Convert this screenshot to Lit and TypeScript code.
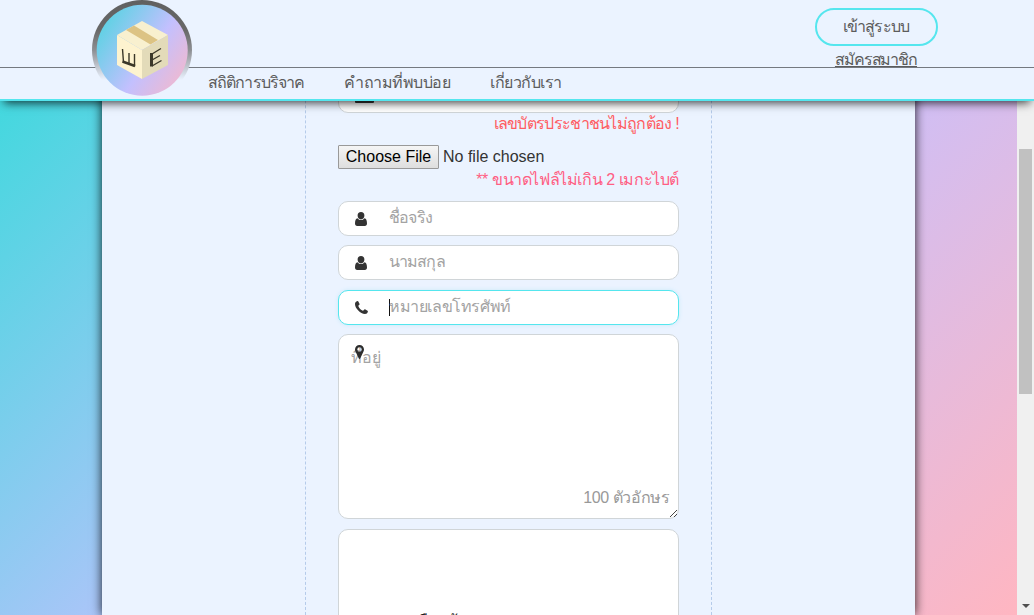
import { LitElement, html, css, svg } from "lit";
import { customElement, property } from "lit/decorators.js";
import { styleMap } from "lit/directives/style-map.js";

const icons: Record<string, unknown> = {
  user: svg`<svg viewBox="0 0 12 14" width="12" height="14"><path fill="#333" d="M6 0C8.200 0 9.400 1.400 9.400 3.600S8.200 7.500 6 7.500 2.600 5.800 2.600 3.600 3.800 0 6 0ZM2.500 6.300C3.500 7.600 4.700 8.100 6 8.100S8.500 7.600 9.500 6.300C11.200 6.600 12 8.500 12 11.500 12 13 11.200 14 9.800 14H2.200C.8 14 0 13 0 11.500 0 8.500.8 6.600 2.500 6.300Z"/></svg>`,
  phone: svg`<svg viewBox="0 0 13 13" width="13" height="13"><path fill="#333" d="M0 3C0 1.500.8.500 2.200.2 2.800 0 3 .1 3.300.6L4.600 3C5 3.700 3.200 4.500 3.300 5.100 4 7.200 6 9.100 7.900 9.800 8.500 9.900 9.300 8 10 8.300L12.500 9.700C13 10 13 10.200 12.800 10.800 12.500 12.200 11.500 13 10 13 5.500 12.800 0 7.500 0 3Z"/></svg>`,
  pin: svg`<svg viewBox="0 0 9 14" width="9" height="14"><path fill="#2c2c2c" fill-rule="evenodd" d="M4.500 0C7 0 9 2 9 4.500 9 5.300 8.800 6 8.500 6.500L5.300 13.300C5 14.100 4 14.100 3.700 13.300L.5 6.500C.2 6 0 5.300 0 4.500 0 2 2 0 4.500 0ZM4.500 2.300A2.200 2.200 0 1 0 4.500 6.700 2.200 2.200 0 0 0 4.500 2.300Z"/></svg>`,
};

const spaced = (text: string, tracking: number) =>
  html`<span style=${styleMap({ letterSpacing: `${tracking}px` })}>${text}</span>`;

@customElement("site-logo")
export class SiteLogo extends LitElement {
  static styles = css`:host { display: block; } svg { display: block; }`;
  render() {
    return html`<svg width="100" height="98" viewBox="0 0 100 98">
      <defs>
        <linearGradient id="ring" x1="0" y1="0" x2="0" y2="1"><stop offset="0" stop-color="#606060"/><stop offset=".3" stop-color="#686868"/><stop offset=".5" stop-color="#8c8e92"/><stop offset=".8" stop-color="#ebf3ff"/></linearGradient>
        <linearGradient id="disc" x1="0" y1=".22" x2="1" y2=".88"><stop offset="0" stop-color="#57d3e2"/><stop offset=".56" stop-color="#c3c0fe"/><stop offset="1" stop-color="#f6b8ca"/></linearGradient>
      </defs>
      <circle cx="50" cy="50" r="50" fill="url(#ring)"/>
      <circle cx="50.200" cy="50.300" r="45.500" fill="url(#disc)"/>
      <path fill="#f8f0cf" d="M50 21 76 35 50 50 25 35Z"/>
      <path fill="#fdf3cf" d="M25 35 50 50V79L25 65Z"/>
      <path fill="#e3dbb9" d="M76 35 50 50V79L76 65Z"/>
      <path fill="#dcc384" d="M34 30 42 25.500 66 40 58.500 44.500Z"/>
      <g fill="none" stroke="#3b3829"><path stroke-width="2.600" d="M30.500 61.500 43 66"/><path stroke-width="1.400" d="M31.500 62.500 30.500 49M37 64V53M42.500 66.500V54"/><path stroke-width="3" d="M59.500 66.500V53"/><path stroke-width="1.400" d="M60 54 69 48.500M60 60 68 55.500M60 66 69.500 60.500"/></g>
    </svg>`;
  }
}

@customElement("form-field")
export class FormField extends LitElement {
  @property() icon = "user";
  @property() label = "";
  @property({ type: Number }) tracking = 0;
  @property({ type: Boolean, reflect: true }) active = false;
  static styles = css`
    :host { box-sizing: border-box; display: flex; align-items: center; height: 35px; border: 1px solid #d0d5d8; border-radius: 10px; background: #fff; color: #a3a3a3; }
    :host([active]) { border-color: #55e6ee; box-shadow: 0 0 4px #c9e9f8; }
    .icon { width: 50px; padding-left: 16px; box-sizing: border-box; display: flex; }
    .caret { width: 1px; height: 17px; background: #111; margin-right: -1px; }
    .label { line-height: 24px; margin-top: -1px; }
  `;
  render() {
    return html`<span class="icon">${icons[this.icon]}</span>${this.active ? html`<span class="caret"></span>` : ""}<span class="label">${spaced(this.label, this.tracking)}</span>`;
  }
}

@customElement("app-root")
export class AppRoot extends LitElement {
  static styles = css`
    :host { display: block; position: relative; width: 1034px; height: 615px; overflow: hidden; font: 16px/24px "Liberation Sans", Arial, sans-serif; color: #5c5c5c; }
    * { box-sizing: border-box; }
    .header { position: absolute; inset: 0 0 auto 0; height: 101px; background: #ebf3ff; border-bottom: 2px solid #55e6ee; box-shadow: 0 6px 9px -4px rgba(0,0,0,.75); z-index: 2; }
    .top { height: 68px; border-bottom: 1px solid #747980; display: flex; flex-direction: column; align-items: center; padding: 8px 0 0 718px; }
    .login { width: 123px; height: 38px; flex: none; border: 2px solid #55e6ee; border-radius: 19px; text-align: center; line-height: 34px; }
    .join { text-decoration: underline; line-height: 22px; margin-top: 3px; white-space: nowrap; }
    .nav { display: flex; padding: 3px 0 0 208px; gap: 40px; white-space: nowrap; }
    .logo { position: absolute; left: 92px; top: 0; }
    .body { display: flex; height: 615px; }
    .scene { width: 1017px; padding-left: 102px; background: linear-gradient(135deg, #32dbda 0%, #c6c0ff 54%, #ffb6c1 100%); }
    .panel { width: 813px; height: 615px; background: #ebf3ff; box-shadow: 0 0 10px rgba(0,0,0,.85); padding-left: 203px; }
    .form { width: 407px; height: 615px; border: dashed #b5cbea; border-width: 0 1px; padding: 78px 32px 0; overflow: hidden; }
    .card { height: 35px; border: 1px solid #d0d5d8; border-radius: 10px; background: #fff; }
    .id { padding: 11px 16px; }
    .id svg { display: block; }
    .note { text-align: right; color: #ff5c62; line-height: 22px; white-space: nowrap; }
    .pink { color: #ff5e83; }
    .file { display: flex; align-items: center; height: 24px; margin-top: 10px; color: #333; }
    .choose { width: 101px; height: 24px; border: 1px solid #999; background: linear-gradient(#f5f5f5,#dedede); color: #000; line-height: 21px; text-align: center; margin-right: 4px; border-radius: 1px; }
    .fields { display: grid; gap: 9.400px; margin-top: 10px; }
    .area { height: 185px; border: 1px solid #d0d5d8; border-radius: 10px; background: #fff; color: #a3a3a3; position: relative; padding: 11px 12px; }
    .pin { position: absolute; left: 16px; top: 10px; display: flex; }
    .count { position: absolute; right: 8.500px; bottom: 8px; color: #999; }
    .grip { position: absolute; right: 0; bottom: 0; }
    .upload { height: 185px; padding: 80px 0 0 74px; color: #222; }
    .bar { width: 17px; background: #f0f0f0; display: flex; flex-direction: column; justify-content: space-between; align-items: center; padding: 149px 0 7px; }
    .thumb { width: 13px; height: 245px; background: #c1c1c1; }
    .arrow { border: 4px solid transparent; border-top-color: #505050; border-bottom: 0; }
  `;
  render() {
    return html`
      <header class="header">
        <div class="top"><div class="login">${spaced("เข้าสู่ระบบ", -0.8)}</div><span class="join">${spaced("สมัครสมาชิก", -1.1)}</span></div>
        <nav class="nav">${spaced("สถิติการบริจาค", -0.9)}${spaced("คำถามที่พบบ่อย", -0.5)}${spaced("เกี่ยวกับเรา", -0.5)}</nav>
        <site-logo class="logo"></site-logo>
      </header>
      <div class="body">
        <main class="scene"><section class="panel"><div class="form">
          <div class="card id"><svg width="19" height="13" viewBox="0 0 19 13"><path d="M1 1h17v11H1z" fill="none" stroke="#333" stroke-width="2" stroke-linejoin="round"/></svg></div>
          <div class="note">${spaced("เลขบัตรประชาชนไม่ถูกต้อง !", -0.7)}</div>
          <div class="file"><span class="choose">Choose File</span><span>No file chosen</span></div>
          <div class="note pink">${spaced("** ขนาดไฟล์ไม่เกิน 2 เมกะไบต์", -0.4)}</div>
          <div class="fields">
            <form-field label="ชื่อจริง" tracking="-0.8"></form-field>
            <form-field label="นามสกุล" tracking="-0.9"></form-field>
            <form-field icon="phone" label="หมายเลขโทรศัพท์" tracking="-0.4" active></form-field>
            <div class="area"><span>ที่อยู่</span><span class="pin">${icons.pin}</span><span class="count">${spaced("100 ตัวอักษร", -0.4)}</span>
              <svg class="grip" width="9" height="9" viewBox="0 0 9 9"><path d="M1 8 8 1M5 8 8 5" stroke="#444" fill="none"/></svg></div>
            <div class="card upload">${spaced("เลือกบ้าน", 0)}</div>
          </div>
        </div></section></main>
        <aside class="bar"><div class="thumb"></div><div class="arrow"></div></aside>
      </div>`;
  }
}
